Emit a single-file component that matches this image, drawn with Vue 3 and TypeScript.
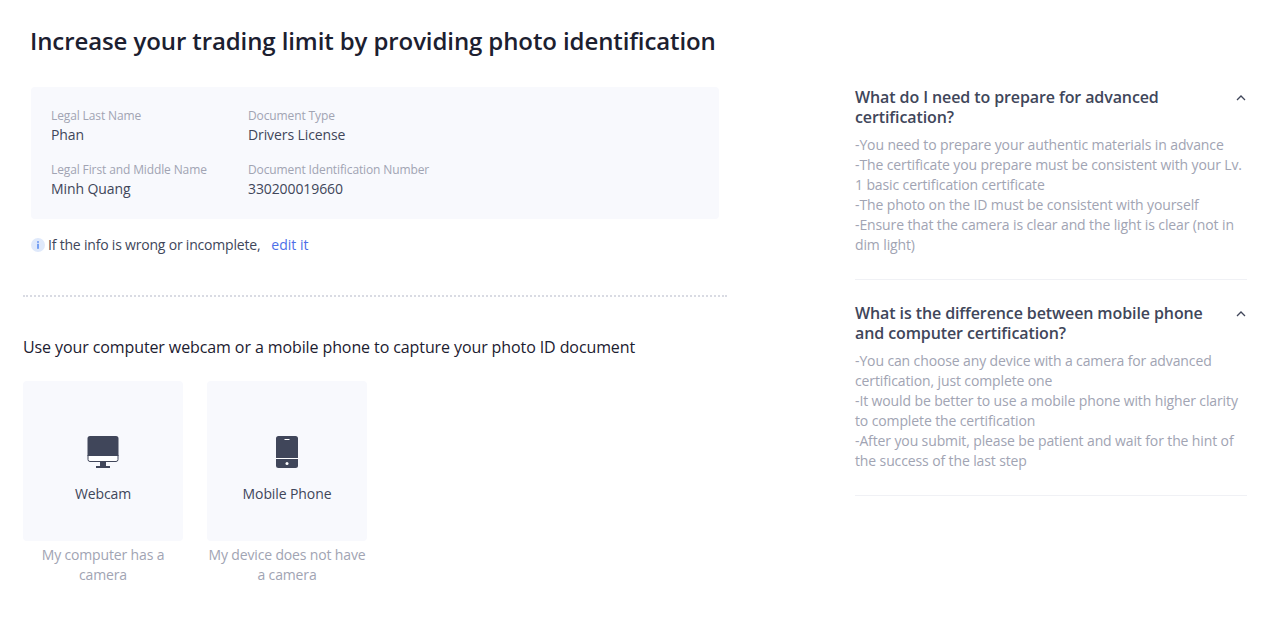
<template>
  <div class="page">
    <div class="main">
      <h1 class="title">Increase your trading limit by providing photo identification</h1>
      <div class="info-box">
        <div class="info-col first">
          <div class="field" v-for="f in nameFields" :key="f.label">
            <div class="field-label">{{ f.label }}</div>
            <div class="field-value">{{ f.value }}</div>
          </div>
        </div>
        <div class="info-col">
          <div class="field" v-for="f in docFields" :key="f.label">
            <div class="field-label">{{ f.label }}</div>
            <div class="field-value">{{ f.value }}</div>
          </div>
        </div>
      </div>
      <div class="notice">
        <svg class="notice-icon" viewBox="0 0 14 14">
          <circle cx="7" cy="7" r="7" fill="#dfe9fb" />
          <rect x="6.2" y="3.2" width="1.6" height="1.6" fill="#5a8df0" />
          <rect x="6.2" y="5.8" width="1.6" height="5" fill="#5a8df0" />
        </svg>
        <span>If the info is wrong or incomplete,</span>
        <a class="edit-link">edit it</a>
      </div>
      <div class="divider"></div>
      <div class="capture-title">Use your computer webcam or a mobile phone to capture your photo ID document</div>
      <div class="options">
        <div class="option">
          <div class="option-card">
            <svg class="option-icon" viewBox="0 0 32 32">
              <path fill="#fff" stroke="#40465a" d="M1 19h30v4.500a2 2 0 0 1-2 2H3a2 2 0 0 1-2-2z" />
              <path fill="#40465a" d="M3 0h26a2.500 2.500 0 0 1 2.500 2.500V20H.5V2.500A2.500 2.500 0 0 1 3 0z" />
              <rect x="13" y="26" width="6" height="4" fill="#40465a" />
              <rect x="9" y="30" width="14" height="2" fill="#40465a" />
            </svg>
            <div class="option-name">Webcam</div>
          </div>
          <div class="option-desc">My computer has a camera</div>
        </div>
        <div class="option">
          <div class="option-card">
            <svg class="option-icon" viewBox="0 0 32 32">
              <path fill="#40465a" d="M7.500 0h17A2.500 2.500 0 0 1 27 2.500V22H5V2.500A2.500 2.500 0 0 1 7.500 0z" />
              <rect x="5" y="22" width="22" height="1" fill="#fff" />
              <path fill="#40465a" d="M5 23h22v6.500a2.500 2.500 0 0 1-2.500 2.500h-17A2.500 2.500 0 0 1 5 29.500z" />
              <rect x="13.500" y="3" width="5" height="1" fill="#fff" />
              <circle cx="16" cy="27.500" r="1.500" fill="#fff" />
            </svg>
            <div class="option-name">Mobile Phone</div>
          </div>
          <div class="option-desc">My device does not have a camera</div>
        </div>
      </div>
    </div>
    <div class="side">
      <div class="faq" v-for="q in faqs" :key="q.title">
        <div class="faq-head">
          <div class="faq-title">{{ q.title }}</div>
          <svg class="chevron" viewBox="0 0 10 6" fill="none" stroke="#40465a" stroke-width="1.300">
            <path d="M1 5l4-4 4 4" />
          </svg>
        </div>
        <div class="faq-body">
          <div v-for="line in q.lines" :key="line">{{ line }}</div>
        </div>
      </div>
    </div>
  </div>
</template>

<script setup lang="ts">
interface Field {
  label: string
  value: string
}

const nameFields: Field[] = [
  { label: 'Legal Last Name', value: 'Phan' },
  { label: 'Legal First and Middle Name', value: 'Minh Quang' },
]

const docFields: Field[] = [
  { label: 'Document Type', value: 'Drivers License' },
  { label: 'Document Identification Number', value: '330200019660' },
]

const faqs = [
  {
    title: 'What do I need to prepare for advanced certification?',
    lines: [
      '-You need to prepare your authentic materials in advance',
      '-The certificate you prepare must be consistent with your Lv. 1 basic certification certificate',
      '-The photo on the ID must be consistent with yourself',
      '-Ensure that the camera is clear and the light is clear (not in dim light)',
    ],
  },
  {
    title: 'What is the difference between mobile phone and computer certification?',
    lines: [
      '-You can choose any device with a camera for advanced certification, just complete one',
      '-It would be better to use a mobile phone with higher clarity to complete the certification',
      '-After you submit, please be patient and wait for the hint of the success of the last step',
    ],
  },
]
</script>

<style>
html,
body {
  margin: 0;
  background: #fff;
}
</style>

<style scoped>
.page {
  display: flex;
  align-items: flex-start;
  padding: 0 28px 0 23px;
  font-family: 'Open Sans', 'Liberation Sans', sans-serif;
  color: #40465a;
}

.main {
  width: 704px;
  flex-shrink: 0;
}

.title {
  margin: 0;
  padding: 23px 0 0 7px;
  font-size: 24px;
  line-height: 36px;
  font-weight: 600;
  letter-spacing: -0.1px;
  color: #1c2030;
  white-space: nowrap;
}

.info-box {
  display: flex;
  margin: 28px 8px 0 8px;
  padding: 20px;
  height: 92px;
  background: #f8f9fd;
  border-radius: 4px;
}

.info-col.first {
  width: 197px;
}

.field + .field {
  margin-top: 16px;
}

.field-label {
  font-size: 12px;
  line-height: 18px;
  letter-spacing: -0.12px;
  color: #a1a4b3;
}

.field-value {
  font-size: 14px;
  line-height: 20px;
  letter-spacing: -0.1px;
  color: #40465a;
}

.notice {
  display: flex;
  align-items: center;
  margin: 15px 0 0 8px;
  font-size: 14px;
  line-height: 22px;
  letter-spacing: -0.2px;
}

.notice-icon {
  width: 14px;
  height: 14px;
  margin-right: 3px;
}

.edit-link {
  margin-left: 11px;
  letter-spacing: 0;
  color: #4d6ee8;
}

.divider {
  margin-top: 39px;
  border-top: 2px dotted #d9dbe3;
}

.capture-title {
  margin-top: 39px;
  font-size: 16px;
  line-height: 22px;
  letter-spacing: -0.1px;
  color: #1c2030;
}

.options {
  display: flex;
  gap: 24px;
  margin-top: 23px;
}

.option {
  width: 160px;
}

.option-card {
  display: flex;
  flex-direction: column;
  align-items: center;
  height: 160px;
  background: #f8f9fd;
  border-radius: 4px;
  box-sizing: border-box;
  padding-top: 55px;
}

.option-icon {
  width: 32px;
  height: 32px;
}

.option-name {
  margin-top: 16px;
  font-size: 14px;
  line-height: 20px;
  letter-spacing: -0.1px;
  color: #40465a;
}

.option-desc {
  margin-top: 4px;
  font-size: 14px;
  line-height: 20px;
  letter-spacing: -0.15px;
  color: #a1a4b3;
  text-align: center;
}

.side {
  width: 392px;
  margin-left: 128px;
  padding-top: 87px;
}

.faq {
  padding-bottom: 24px;
  border-bottom: 1px solid #f0f1f5;
}

.faq + .faq {
  margin-top: 23px;
}

.faq-head {
  display: flex;
  justify-content: space-between;
  align-items: flex-start;
}

.faq-title {
  width: 360px;
  font-size: 16px;
  line-height: 20px;
  font-weight: 600;
  letter-spacing: -0.1px;
  color: #40465a;
}

.chevron {
  width: 10px;
  height: 6px;
  margin: 8px 1px 0 0;
}

.faq-body {
  margin-top: 8px;
  font-size: 14px;
  line-height: 20px;
  letter-spacing: -0.12px;
  color: #a1a4b3;
}
</style>
